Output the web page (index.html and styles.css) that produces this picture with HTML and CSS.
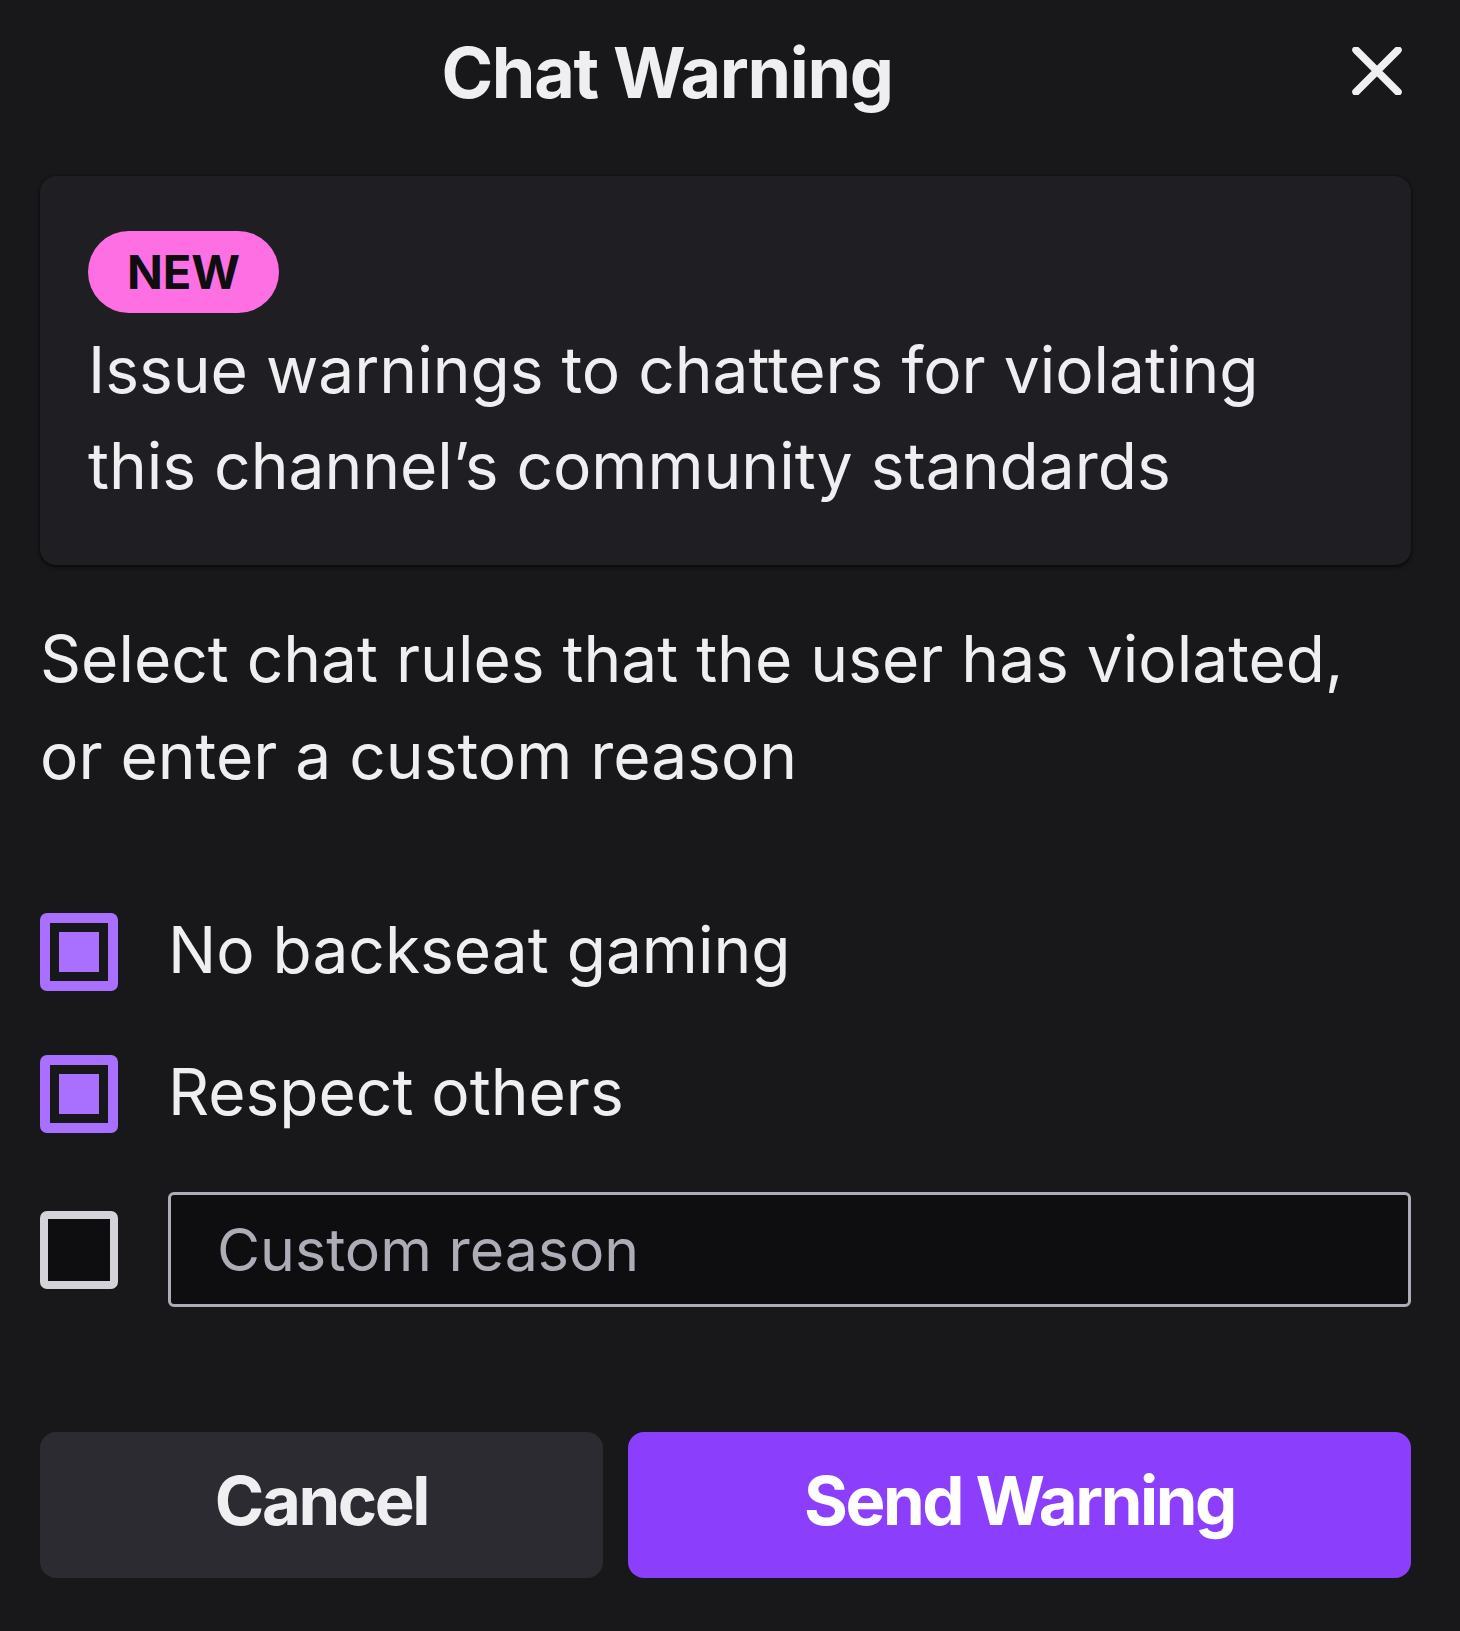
FILE: index.html
```html
<!DOCTYPE html>
<html lang="en">
<head>
    <meta charset="UTF-8">
    <meta name="viewport" content="width=device-width, initial-scale=1.0">
    <title>Chat Warning</title>
    <link rel="stylesheet" href="styles.css">
</head>
<body>
    <div class="modal">
        <div class="header">
            <div class="title">Chat Warning</div>
            <button class="close" aria-label="Close">
                <svg width="52" height="48" viewBox="0 0 52 48">
                    <path d="M5 3 L47 45 M47 3 L5 45" stroke="#efeff1" stroke-width="7.5" stroke-linecap="round" fill="none"/>
                </svg>
            </button>
        </div>

        <div class="card">
            <span class="badge">NEW</span>
            <p class="card-text">Issue warnings to chatters for violating this channel’s community standards</p>
        </div>

        <p class="intro">Select chat rules that the user has violated, or enter a custom reason</p>

        <div class="rules">
            <label class="rule">
                <span class="box checked"></span>
                <span class="rule-label">No backseat gaming</span>
            </label>
            <label class="rule rule-second">
                <span class="box checked"></span>
                <span class="rule-label">Respect others</span>
            </label>
            <div class="rule rule-custom">
                <span class="box"></span>
                <input class="reason" type="text" placeholder="Custom reason">
            </div>
        </div>

        <div class="actions">
            <button class="btn btn-cancel">Cancel</button>
            <button class="btn btn-send">Send Warning</button>
        </div>
    </div>
</body>
</html>
```

FILE: styles.css
```css
body {
    margin: 0;
    background: #18181b;
    color: #efeff1;
    font-family: Inter, "Noto Sans", sans-serif;
}
.modal {
    padding: 0 49px 0 40px;
}
.header {
    display: flex;
    align-items: center;
    height: 146px;
}
.title {
    flex: 1;
    text-align: center;
    font-size: 70px;
    font-weight: 700;
    letter-spacing: -1.3px;
    line-height: 1;
}
.close {
    width: 117px;
    display: flex;
    justify-content: flex-end;
    padding: 0 8px 4px 0;
    background: none;
    border: 0;
}
.card {
    margin-top: 30px;
    background: #1f1f23;
    border-radius: 16px;
    box-shadow: 0 2px 4px rgba(0, 0, 0, 0.6), 0 0 2px rgba(0, 0, 0, 0.5);
    padding: 55px 48px 51px;
}
.badge {
    display: inline-block;
    background: #ff6fe4;
    color: #0e0e10;
    font-size: 47px;
    font-weight: 700;
    line-height: 82px;
    height: 82px;
    padding: 0 39px;
    border-radius: 41px;
}
.card-text {
    margin: 9px 0 0;
    font-size: 64px;
    line-height: 96px;
}
.intro {
    margin: 45px 0 0;
    font-size: 64px;
    line-height: 97px;
}
.rules {
    margin-top: 109px;
}
.rule {
    display: flex;
    align-items: center;
    gap: 50px;
    font-size: 64px;
}
.rule-second {
    margin-top: 64px;
}
.rule-custom {
    margin-top: 59px;
}
.box {
    flex: 0 0 auto;
    width: 78px;
    height: 78px;
    box-sizing: border-box;
    border: 8px solid #d3d3d9;
    border-radius: 7px;
    background: #0e0e10;
}
.box.checked {
    border: 10px solid #a970ff;
    padding: 9px;
    background: #0e0e10 content-box;
}
.box.checked::after {
    content: "";
    display: block;
    width: 100%;
    height: 100%;
    background: #a970ff;
}
.rule-label {
    line-height: 74px;
    padding-bottom: 4px;
}
.reason {
    flex: 1;
    height: 115px;
    box-sizing: border-box;
    border: 3px solid #adadb8;
    border-radius: 6px;
    background: #0e0e10;
    padding: 0 46px;
    font-family: inherit;
    font-size: 59px;
    color: #efeff1;
}
.reason::placeholder {
    color: #adadb8;
}
.actions {
    display: flex;
    gap: 25px;
    margin-top: 125px;
}
.btn {
    height: 146px;
    padding-bottom: 10px;
    border: 0;
    border-radius: 16px;
    font-family: inherit;
    font-size: 67px;
    font-weight: 700;
    letter-spacing: -2.4px;
    color: #ffffff;
}
.btn-cancel {
    flex: 0 0 563px;
    background: #2c2b31;
    color: #efeff1;
}
.btn-send {
    flex: 1;
    background: #8b3ffd;
}
```
